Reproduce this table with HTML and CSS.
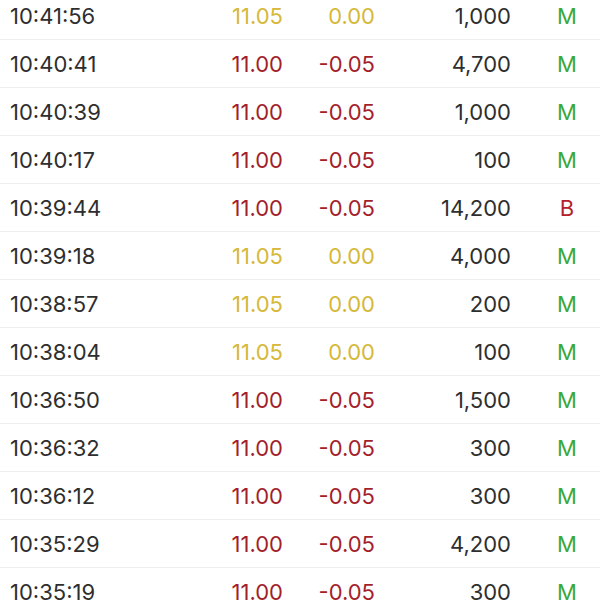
FILE: index.html
```html
<!DOCTYPE html>
<html>
<head>
<meta charset="utf-8">
<link rel="stylesheet" href="styles.css">
</head>
<body>
<div class="list">
  <div class="row"><span class="time">10:41:56</span><span class="price up">11.05</span><span class="chg up">0.00</span><span class="vol">1,000</span><span class="side m">M</span></div>
  <div class="row"><span class="time">10:40:41</span><span class="price dn">11.00</span><span class="chg dn">-0.05</span><span class="vol">4,700</span><span class="side m">M</span></div>
  <div class="row"><span class="time">10:40:39</span><span class="price dn">11.00</span><span class="chg dn">-0.05</span><span class="vol">1,000</span><span class="side m">M</span></div>
  <div class="row"><span class="time">10:40:17</span><span class="price dn">11.00</span><span class="chg dn">-0.05</span><span class="vol">100</span><span class="side m">M</span></div>
  <div class="row"><span class="time">10:39:44</span><span class="price dn">11.00</span><span class="chg dn">-0.05</span><span class="vol">14,200</span><span class="side b">B</span></div>
  <div class="row"><span class="time">10:39:18</span><span class="price up">11.05</span><span class="chg up">0.00</span><span class="vol">4,000</span><span class="side m">M</span></div>
  <div class="row"><span class="time">10:38:57</span><span class="price up">11.05</span><span class="chg up">0.00</span><span class="vol">200</span><span class="side m">M</span></div>
  <div class="row"><span class="time">10:38:04</span><span class="price up">11.05</span><span class="chg up">0.00</span><span class="vol">100</span><span class="side m">M</span></div>
  <div class="row"><span class="time">10:36:50</span><span class="price dn">11.00</span><span class="chg dn">-0.05</span><span class="vol">1,500</span><span class="side m">M</span></div>
  <div class="row"><span class="time">10:36:32</span><span class="price dn">11.00</span><span class="chg dn">-0.05</span><span class="vol">300</span><span class="side m">M</span></div>
  <div class="row"><span class="time">10:36:12</span><span class="price dn">11.00</span><span class="chg dn">-0.05</span><span class="vol">300</span><span class="side m">M</span></div>
  <div class="row"><span class="time">10:35:29</span><span class="price dn">11.00</span><span class="chg dn">-0.05</span><span class="vol">4,200</span><span class="side m">M</span></div>
  <div class="row"><span class="time">10:35:19</span><span class="price dn">11.00</span><span class="chg dn">-0.05</span><span class="vol">300</span><span class="side m">M</span></div>
</div>
</body>
</html>
```
FILE: styles.css
```css
html, body {
  margin: 0;
  padding: 0;
  background: #ffffff;
  overflow: hidden;
}
.list {
  margin-top: -8px;
  font-family: Inter, "Noto Sans", sans-serif;
  font-size: 22px;
  color: #2e2e2e;
}
.row {
  display: grid;
  grid-template-columns: 213px 60px 92px 136px 1fr;
  padding-left: 10px;
  height: 47px;
  border-bottom: 1px solid #eeeeee;
  align-items: center;
}
.time { text-align: left; }
.price { text-align: right; }
.chg { text-align: right; }
.vol { text-align: right; white-space: nowrap; }
.side { text-align: center; padding-left: 23px; }
.up { color: #d6b83a; }
.dn { color: #a21f2b; }
.m { color: #3aa93a; }
.b { color: #b3202c; }
```
